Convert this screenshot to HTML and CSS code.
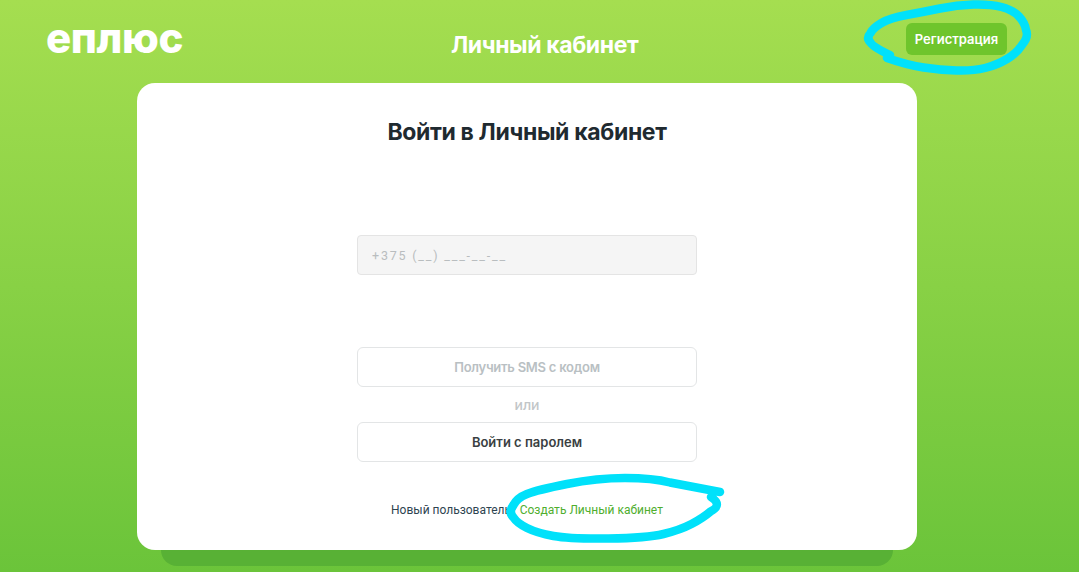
FILE: index.html
```html
<!DOCTYPE html>
<html lang="ru">
<head>
<meta charset="utf-8">
<title>Личный кабинет</title>
<link rel="stylesheet" href="styles.css">
</head>
<body>
<div class="page">
  <header class="header">
    <a class="logo">еплюс</a>
    <div class="header-title">Личный кабинет</div>
    <a class="register">Регистрация</a>
  </header>
  <main class="card">
    <h1 class="title">Войти в Личный кабинет</h1>
    <input class="phone" type="text" placeholder="+375 (__) ___-__-__">
    <button class="btn btn-muted" type="button">Получить SMS с кодом</button>
    <div class="or">или</div>
    <button class="btn" type="button">Войти с паролем</button>
    <p class="new-user">Новый пользователь? <a class="create">Создать Личный кабинет</a></p>
  </main>
  <div class="card-shadow"></div>
</div>
<svg class="scribble" viewBox="0 0 1079 572" width="1079" height="572" aria-hidden="true">
  <path d="M890,55 Q873,47 870.5,42.5 Q866,38 870.5,33 Q873,28 881.5,23 Q890,18 906.5,15 Q923,12 940,8.5 Q957,5 973.5,4.5 Q990,4 1001.5,7 Q1013,10 1019,16.5 Q1025,23 1026,30 Q1029,37 1022,45 Q1017,53 1007,59 Q997,65 985,68 Q973,71 956.5,70.5 Q940,70 923.5,67.5 Q907,65 887,58"/>
  <path d="M720,492 L670,482.5 Q653,478 625,478 Q597,478 567,484 Q537,490 527,494 Q517,498 513.5,505 Q508,512 513.5,517.5 Q517,523 527,528 Q537,533 553.5,536 Q570,539 608.5,538.5 Q647,538 663.5,534 Q680,530 691.5,524 Q703,518 710.5,511.5 Q723,505 711,497"/>
</svg>
</body>
</html>
```
FILE: styles.css
```css
* { box-sizing: border-box; }
html, body { margin: 0; height: 100%; overflow: hidden; }
body {
  position: relative;
  font-family: Inter, "Noto Sans", sans-serif;
  background: linear-gradient(180deg, #a5de50 0%, #6bc43a 100%);
}
.page { display: flex; flex-direction: column; align-items: flex-start; height: 572px; }
.header {
  width: 100%;
  height: 83px;
  padding: 0 72px 0 46px;
  display: grid;
  grid-template-columns: 405px auto 1fr;
  align-items: center;
}
.logo {
  font-size: 42px;
  font-weight: 800;
  line-height: 1;
  color: #fff;
  letter-spacing: -0.4px;
  margin-top: -8px;
}
.header-title {
  font-size: 23px;
  font-weight: 700;
  color: #fff;
  margin-top: 6px;
  letter-spacing: -0.4px;
}
.register {
  justify-self: end;
  width: 101px;
  height: 32px;
  margin-top: -5px;
  border-radius: 6px;
  background: #6fc52c;
  color: #fff;
  font-size: 13px;
  font-weight: 600;
  display: flex;
  align-items: center;
  justify-content: center;
}
.card {
  width: 780px;
  height: 467px;
  flex: none;
  margin-left: 137px;
  background: #fff;
  border-radius: 18px;
  display: flex;
  flex-direction: column;
  align-items: center;
  padding-top: 35px;
}
.title {
  margin: 0;
  height: 28px;
  font-size: 23px;
  line-height: 28px;
  font-weight: 700;
  color: #1f2a30;
  letter-spacing: -0.35px;
}
.phone {
  display: block;
  width: 340px;
  height: 40px;
  margin-top: 89px;
  padding: 0 14px;
  background: #f5f5f5;
  border: 1px solid #e4e4e4;
  border-radius: 4px;
  font-family: Roboto, sans-serif;
  font-size: 12.5px;
  letter-spacing: 1.8px;
  outline: none;
}
.phone::placeholder { color: #b9bdbf; opacity: 1; }
.btn {
  display: block;
  width: 340px;
  height: 40px;
  background: #fff;
  border: 1px solid #e3e5e6;
  border-radius: 6px;
  font-family: Inter, sans-serif;
  font-size: 13px;
  font-weight: 600;
  color: #3a3f42;
}
.btn-muted { margin-top: 72px; color: #b9c0c3; letter-spacing: -0.25px; }
.or {
  height: 35px;
  line-height: 36px;
  font-size: 14px;
  font-weight: 500;
  color: #c2c6c8;
}
.new-user {
  margin: 40px 0 0;
  font-family: Roboto, sans-serif;
  font-size: 12px;
  line-height: 16px;
  color: #2e4450;
}
.create { color: #4fae2e; }
.card-shadow {
  width: 732px;
  height: 16px;
  flex: none;
  margin-left: 161px;
  background: #58b135;
  border-radius: 0 0 16px 16px;
}
.scribble { position: absolute; left: 0; top: 0; pointer-events: none; }
.scribble path {
  fill: none;
  stroke: #00e1fa;
  stroke-width: 8.5;
  stroke-linecap: round;
  stroke-linejoin: round;
}
```
